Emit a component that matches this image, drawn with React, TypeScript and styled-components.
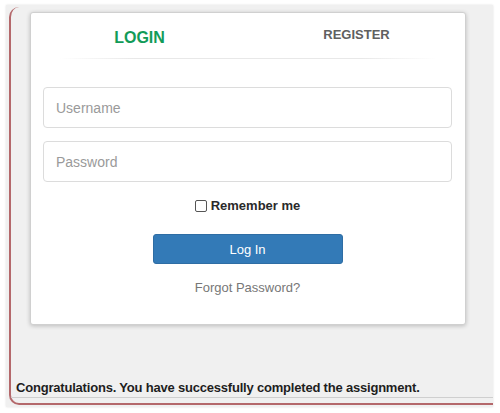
import React from "react";
import styled, { createGlobalStyle } from "styled-components";

const Global = createGlobalStyle`
  html, body { margin: 0; padding: 0; background: #ffffff; }
  body { font-family: "Liberation Sans", Arial, Helvetica, sans-serif; }
  * { box-sizing: border-box; }
`;

const Page = styled.div`
  width: 500px;
  height: 413px;
  padding: 5px 7px 6px 6px;
`;

const GrayBox = styled.div`
  background: #f0f0f0;
  box-shadow: 0 0 2px rgba(0, 0, 0, 0.12);
  padding: 2px 0 3px 3px;
  height: 100%;
`;

const Frame = styled.div`
  border-left: 2px solid #b4686b;
  border-bottom: 2px solid #b4686b;
  border-radius: 10px 0 0 10px;
  display: flex;
  flex-direction: column;
  padding-bottom: 5px;
`;

const Card = styled.div`
  margin: 5px 27px 0 19px;
  background: #fff;
  border: 1px solid #d0d0d0;
  border-radius: 3px;
  box-shadow: 0 1px 4px rgba(0, 0, 0, 0.22);
  padding-bottom: 29px;
`;

const Tabs = styled.div`
  display: grid;
  grid-template-columns: 1fr 1fr;
  height: 45px;
`;

const Tab = styled.div<{ $active?: boolean }>`
  text-align: center;
  font-weight: bold;
  font-size: ${(p) => (p.$active ? "16px" : "13px")};
  line-height: ${(p) => (p.$active ? "18px" : "15px")};
  padding-top: ${(p) => (p.$active ? "16px" : "14px")};
  color: ${(p) => (p.$active ? "#129b58" : "#606060")};
`;

const TabLine = styled.div`
  height: 1px;
  margin: 0 28px;
  background: linear-gradient(to right, rgba(230,230,230,0), #e8e8e8 20%, #e8e8e8 80%, rgba(230,230,230,0));
`;

const Form = styled.div`
  padding: 28px 13px 0 12px;
  display: flex;
  flex-direction: column;
  align-items: center;
`;

const Input = styled.input`
  width: 100%;
  height: 41px;
  border: 1px solid #dcdcdc;
  border-radius: 4px;
  padding: 0 12px;
  font-family: inherit;
  font-size: 14px;
  color: #333;
  background: #fff;
  margin-bottom: 13px;
  outline: none;
  &::placeholder { color: #9a9a9a; }
`;

const Remember = styled.label`
  display: flex;
  align-items: center;
  margin-top: 3px;
  font-weight: bold;
  font-size: 13px;
  line-height: 16px;
  color: #2a2a2a;
`;

const Check = styled.input`
  appearance: none;
  width: 12px;
  height: 12px;
  margin: 0 4px 0 0;
  border: 1px solid #555;
  border-radius: 2px;
  background: #fff;
`;

const Button = styled.button`
  margin-top: 20px;
  width: 190px;
  height: 30px;
  background: #337ab7;
  border: 1px solid #2e6da4;
  border-radius: 3px;
  color: #fff;
  font-family: inherit;
  font-size: 13px;
  padding: 0;
`;

const Forgot = styled.div`
  margin-top: 16px;
  font-size: 13px;
  line-height: 15px;
  color: #777;
`;

const Done = styled.div`
  margin-top: 55px;
  padding: 0 0 2px 5px;
  border-bottom: 1px solid #cfcfcf;
  font-weight: bold;
  font-size: 13px;
  letter-spacing: -0.2px;
  line-height: 15px;
  color: #1e1e1e;
`;

export default function App() {
  return (
    <>
      <Global />
      <Page>
        <GrayBox>
          <Frame>
            <Card>
              <Tabs>
                <Tab $active>LOGIN</Tab>
                <Tab>REGISTER</Tab>
              </Tabs>
              <TabLine />
              <Form>
                <Input placeholder="Username" />
                <Input type="password" placeholder="Password" />
                <Remember>
                  <Check type="checkbox" />
                  Remember me
                </Remember>
                <Button>Log In</Button>
                <Forgot>Forgot Password?</Forgot>
              </Form>
            </Card>
            <Done>Congratulations. You have successfully completed the assignment.</Done>
          </Frame>
        </GrayBox>
      </Page>
    </>
  );
}
